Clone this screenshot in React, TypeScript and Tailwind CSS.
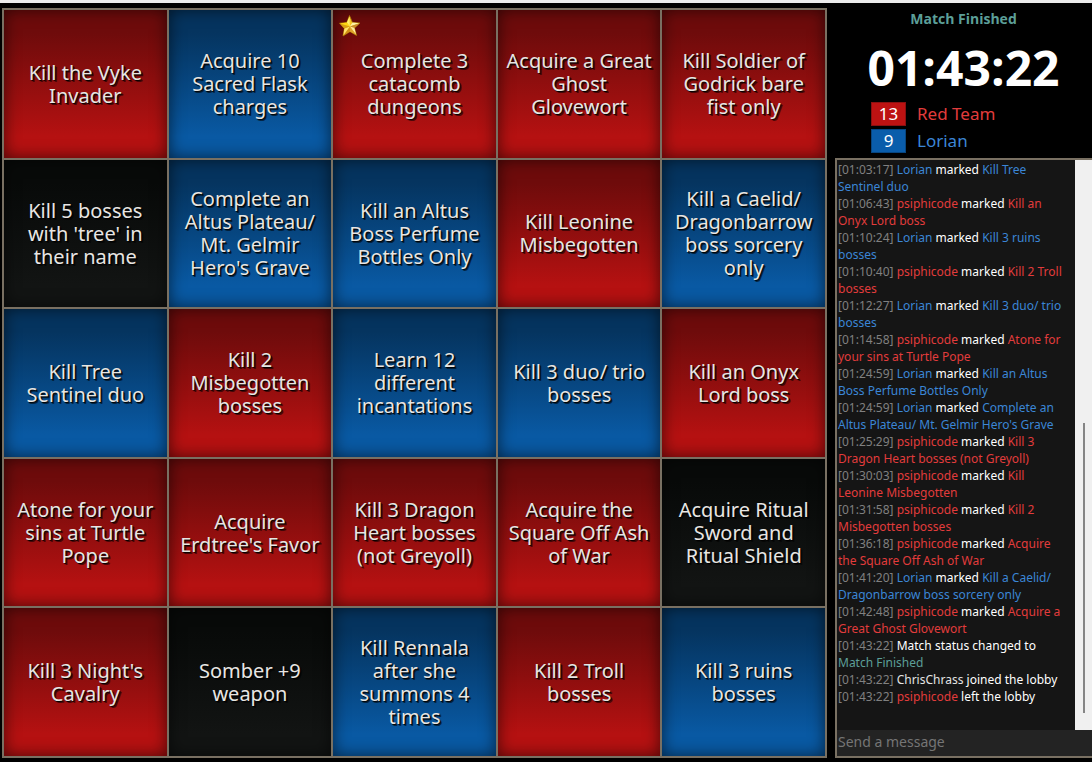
import { useState } from "react";

type Owner = "red" | "blue" | "none";
type Goal = { text: string; owner: Owner; starred?: boolean };

const goals: Goal[] = [
  { text: "Kill the Vyke Invader", owner: "red" },
  { text: "Acquire 10 Sacred Flask charges", owner: "blue" },
  { text: "Complete 3 catacomb dungeons", owner: "red", starred: true },
  { text: "Acquire a Great Ghost Glovewort", owner: "red" },
  { text: "Kill Soldier of Godrick bare fist only", owner: "red" },
  { text: "Kill 5 bosses with 'tree' in their name", owner: "none" },
  { text: "Complete an Altus Plateau/ Mt. Gelmir Hero's Grave", owner: "blue" },
  { text: "Kill an Altus Boss Perfume Bottles Only", owner: "blue" },
  { text: "Kill Leonine Misbegotten", owner: "red" },
  { text: "Kill a Caelid/ Dragonbarrow boss sorcery only", owner: "blue" },
  { text: "Kill Tree Sentinel duo", owner: "blue" },
  { text: "Kill 2 Misbegotten bosses", owner: "red" },
  { text: "Learn 12 different incantations", owner: "blue" },
  { text: "Kill 3 duo/ trio bosses", owner: "blue" },
  { text: "Kill an Onyx Lord boss", owner: "red" },
  { text: "Atone for your sins at Turtle Pope", owner: "red" },
  { text: "Acquire Erdtree's Favor", owner: "red" },
  { text: "Kill 3 Dragon Heart bosses (not Greyoll)", owner: "red" },
  { text: "Acquire the Square Off Ash of War", owner: "red" },
  { text: "Acquire Ritual Sword and Ritual Shield", owner: "none" },
  { text: "Kill 3 Night's Cavalry", owner: "red" },
  { text: "Somber +9 weapon", owner: "none" },
  { text: "Kill Rennala after she summons 4 times", owner: "blue" },
  { text: "Kill 2 Troll bosses", owner: "red" },
  { text: "Kill 3 ruins bosses", owner: "blue" },
];

const cellColors: Record<Owner, string> = {
  red: "from-[#6e0b0b] to-[#b51111]",
  blue: "from-[#05345f] to-[#0959a3]",
  none: "from-[#080a09] to-[#121413]",
};

const RED = "text-[#e23c3c]";
const BLUE = "text-[#3b86d6]";
const TEAL = "text-[#5c9f98]";
const WHITE = "text-white";

type Part = [text: string, color: string];
type Message = { time: string; parts: Part[] };

const mark = (time: string, who: "Lorian" | "psiphicode", goal: string): Message => {
  const color = who === "Lorian" ? BLUE : RED;
  return { time, parts: [[who, color], ["marked", WHITE], [goal, color]] };
};

const messages: Message[] = [
  mark("01:03:17", "Lorian", "Kill Tree Sentinel duo"),
  mark("01:06:43", "psiphicode", "Kill an Onyx Lord boss"),
  mark("01:10:24", "Lorian", "Kill 3 ruins bosses"),
  mark("01:10:40", "psiphicode", "Kill 2 Troll bosses"),
  mark("01:12:27", "Lorian", "Kill 3 duo/ trio bosses"),
  mark("01:14:58", "psiphicode", "Atone for your sins at Turtle Pope"),
  mark("01:24:59", "Lorian", "Kill an Altus Boss Perfume Bottles Only"),
  mark("01:24:59", "Lorian", "Complete an Altus Plateau/ Mt. Gelmir Hero's Grave"),
  mark("01:25:29", "psiphicode", "Kill 3 Dragon Heart bosses (not Greyoll)"),
  mark("01:30:03", "psiphicode", "Kill Leonine Misbegotten"),
  mark("01:31:58", "psiphicode", "Kill 2 Misbegotten bosses"),
  mark("01:36:18", "psiphicode", "Acquire the Square Off Ash of War"),
  mark("01:41:20", "Lorian", "Kill a Caelid/ Dragonbarrow boss sorcery only"),
  mark("01:42:48", "psiphicode", "Acquire a Great Ghost Glovewort"),
  { time: "01:43:22", parts: [["Match status changed to", WHITE], ["Match Finished", TEAL]] },
  { time: "01:43:22", parts: [["ChrisChrass", "text-[#e4e4e4]"], ["joined the lobby", WHITE]] },
  { time: "01:43:22", parts: [["psiphicode", RED], ["left the lobby", WHITE]] },
];

function Star() {
  return (
    <svg viewBox="0 0 22 22" className="absolute top-[5px] left-1.5 size-[22px]" aria-hidden="true">
      <path d="M10.5 0.5 13.4 7.4 21 8 15.4 13 17.6 20.5 11 16.6 4 21 5.4 13.6 0.5 8.2 7.8 7.5Z" fill="#f7c41c" stroke="#a87408" strokeWidth="0.8" />
      <path d="M10.5 1.5 10.8 11.6 7.8 7.5Z" fill="#fff06a" />
      <path d="M1 8.5 7.8 7.5 10.8 11.6Z" fill="#ffd814" />
      <path d="M20.4 8.2 13.4 7.4 10.8 11.6Z" fill="#fff3a6" />
      <path d="M20.4 8.2 15.4 13 10.8 11.6Z" fill="#c98a2a" />
      <path d="M17.2 19.8 10.8 11.6 15.4 13Z" fill="#ffe9a0" />
      <path d="M17.2 19.8 11 16.6 10.8 11.6Z" fill="#dda52e" />
      <path d="M4.4 20.2 10.8 11.6 11 16.6Z" fill="#d08f16" />
      <path d="M4.4 20.2 5.4 13.6 10.8 11.6Z" fill="#ffe46a" />
      <path d="M1 8.5 5.4 13.6 10.8 11.6Z" fill="#d9a012" />
    </svg>
  );
}

function Board() {
  return (
    <main className="grid min-w-0 flex-1 auto-rows-fr grid-cols-5 gap-0.5 border-2 border-[#797062] bg-[#797062]">
      {goals.map((goal) => (
        <button
          key={goal.text}
          type="button"
          className={`relative flex min-w-0 items-center justify-center bg-linear-to-b from-15% to-85% px-1.5 text-center text-[20px] leading-[23px] text-[#e8e6e3] shadow-[inset_0_0_16px_rgba(0,0,0,0.6)] [text-shadow:1px_1px_1px_#000,2px_2px_0_rgba(0,0,0,0.5)] ${cellColors[goal.owner]}`}
        >
          {goal.starred && <Star />}
          {goal.text}
        </button>
      ))}
    </main>
  );
}

function Scores() {
  return (
    <ul className="mt-[9px] ml-9 flex flex-col gap-[3px] text-[17px] leading-[22px]">
      <li className="flex items-center gap-[11px]">
        <span className="w-[35px] border border-[#8a1010] bg-[#bd1212] text-center text-white">13</span>
        <span className={RED}>Red Team</span>
      </li>
      <li className="flex items-center gap-[11px]">
        <span className="w-[35px] border border-[#084680] bg-[#0a5dab] text-center text-white">9</span>
        <span className={BLUE}>Lorian</span>
      </li>
    </ul>
  );
}

function Chat() {
  const [draft, setDraft] = useState("");
  return (
    <section className="flex min-h-0 flex-1 flex-col border-y-2 border-l-2 border-[#797062] bg-[#151515]">
      <div className="flex min-h-0 flex-1">
        <ol className="min-w-0 flex-1 overflow-hidden pt-px pr-1 pl-px text-[12px] leading-[17px]">
          {messages.map((message, index) => (
            <li key={index}>
              <span className="text-[#808080]">[{message.time}]</span>
              {message.parts.map(([text, color]) => (
                <span key={text} className={color}>
                  {" "}
                  {text}
                </span>
              ))}
            </li>
          ))}
        </ol>
        <div className="flex w-[17px] flex-col items-center bg-[#f0f0f0] pb-[17px]" aria-hidden="true">
          <div className="flex-[263]" />
          <div className="w-0.5 flex-[290] bg-[#858585]" />
        </div>
      </div>
      <input
        type="text"
        aria-label="Send a message"
        placeholder="Send a message"
        value={draft}
        onChange={(event) => setDraft(event.target.value)}
        className="h-[26px] w-full bg-[#232323] px-px pb-1 text-[14px] text-white outline-none placeholder:text-[#757575]"
      />
    </section>
  );
}

export default function App() {
  return (
    <div className="flex h-screen flex-col border-t-[3px] border-[#ececec] bg-black font-['Noto_Sans',sans-serif]">
      <div className="flex min-h-0 flex-1 gap-2 pt-[5px] pb-1 pl-0.5">
        <Board />
        <aside className="flex w-[257px] flex-col">
          <header className="font-['Open_Sans','Noto_Sans',sans-serif] font-bold">
            <h2 className={`text-center text-[14px] leading-[22px] ${TEAL}`}>Match Finished</h2>
            <div className="mt-3 text-center text-[48px] leading-[51px] text-white">01:43:22</div>
          </header>
          <Scores />
          <div className="mt-[5px] flex min-h-0 flex-1 flex-col">
            <Chat />
          </div>
        </aside>
      </div>
    </div>
  );
}
